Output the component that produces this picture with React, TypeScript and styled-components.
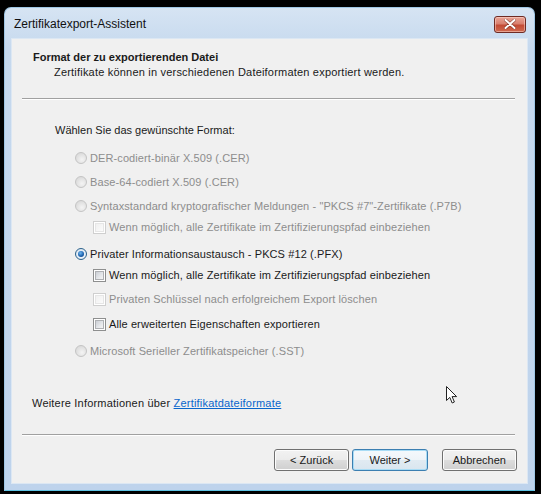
import React from "react";
import styled, { createGlobalStyle } from "styled-components";

const Global = createGlobalStyle`
  html, body { margin: 0; padding: 0; background: #000; }
  body { font-family: "Liberation Sans", Arial, sans-serif; }
`;

const Page = styled.div`
  position: relative;
  width: 541px;
  height: 494px;
  background: #000;
  overflow: hidden;
  padding: 7px 0 0 4px;
  box-sizing: border-box;
`;

const Window = styled.div`
  width: 531px;
  height: 484px;
  box-sizing: border-box;
  border: 1px solid #9fc6e4;
  border-bottom-color: #5fc3e3;
  border-radius: 7px 7px 0 0;
  background: linear-gradient(#d6e4f3 0px, #c6d9ee 40px, #bed3ec 100%);
  padding: 0 6px 6px 6px;
  display: flex;
  flex-direction: column;
`;

const TitleBar = styled.div`
  height: 30px;
  display: flex;
  align-items: center;
  justify-content: space-between;
  padding: 2px 2px 0 3px;
  box-sizing: border-box;
`;

const Title = styled.span`
  font-family: "Liberation Sans", Arial, sans-serif;
  font-size: 12px;
  color: #111;
`;

const CloseButton = styled.div`
  width: 32px;
  height: 17px;
  box-sizing: border-box;
  border: 1px solid #6e2b24;
  border-radius: 3px;
  background: linear-gradient(#e9a597 0%, #d9806f 45%, #c34b35 55%, #cf6a50 100%);
  box-shadow: inset 0 0 0 1px rgba(255, 220, 210, 0.5);
  display: flex;
  align-items: center;
  justify-content: center;
`;

const Client = styled.div`
  flex: 1;
  background: #f0f0f0;
  border: 1px solid #dce7f3;
  box-sizing: border-box;
  display: flex;
  flex-direction: column;
  color: #1a1a1a;
  font-size: 11px;
`;

const Heading = styled.div`
  font-weight: bold;
  margin: 11px 0 0 21px;
  line-height: 14px;
  font-size: 11px;
`;

const SubHeading = styled.div`
  margin: 1px 0 0 42px;
  line-height: 14px;
  letter-spacing: 0.2px;
`;

const Separator = styled.div<{ $top: number }>`
  margin: ${(p) => p.$top}px 12px 0 10px;
  height: 0;
  border-top: 1px solid #a0a0a0;
  border-bottom: 1px solid #ffffff;
`;

const Prompt = styled.div`
  margin: 23px 0 0 43px;
  line-height: 14px;
`;

const OptionList = styled.div`
  display: flex;
  flex-direction: column;
  margin-left: 63px;
`;

const Option = styled.label<{ $top: number; $indent?: boolean; $disabled?: boolean }>`
  display: flex;
  align-items: center;
  gap: 3px;
  height: 14px;
  line-height: 14px;
  margin-top: ${(p) => p.$top}px;
  margin-left: ${(p) => (p.$indent ? 18 : 0)}px;
  color: ${(p) => (p.$disabled ? "#8d8d8d" : "#1a1a1a")};
  white-space: nowrap;
  letter-spacing: 0.1px;
`;

const RadioMark = styled.span<{ $checked?: boolean; $disabled?: boolean }>`
  width: 12px;
  height: 12px;
  box-sizing: border-box;
  border-radius: 50%;
  border: 1px solid ${(p) => (p.$disabled ? "#c4c4c4" : "#2c628b")};
  background: ${(p) =>
    p.$disabled
      ? "radial-gradient(circle at 60% 65%, #f4f4f4 0%, #e0e0e0 60%, #d4d4d4 100%)"
      : "radial-gradient(circle at 55% 60%, #f8fbfe 0%, #dce8f3 70%, #c5d6e6 100%)"};
  display: flex;
  align-items: center;
  justify-content: center;
  flex-shrink: 0;
  &::after {
    content: "";
    display: ${(p) => (p.$checked ? "block" : "none")};
    width: 6px;
    height: 6px;
    border-radius: 50%;
    background: radial-gradient(circle at 40% 35%, #6fb7f0 0%, #1e64b0 55%, #0b3a72 100%);
  }
`;

const CheckMark = styled.span<{ $disabled?: boolean }>`
  width: 13px;
  height: 13px;
  box-sizing: border-box;
  border: 1px solid ${(p) => (p.$disabled ? "#cfcfcf" : "#8e8f8f")};
  padding: 1px;
  background: #ffffff;
  flex-shrink: 0;
  &::after {
    content: "";
    display: block;
    width: 100%;
    height: 100%;
    box-sizing: border-box;
    border: 1px solid ${(p) => (p.$disabled ? "#e6e6e6" : "#aeb0b3")};
    background: ${(p) =>
      p.$disabled
        ? "linear-gradient(135deg, #f0f0f0, #fbfbfb)"
        : "linear-gradient(135deg, #cbcfd5 0%, #e6e8eb 60%, #f4f4f4 100%)"};
  }
`;

const InfoLine = styled.div`
  margin: 38px 0 0 20px;
  line-height: 14px;
  letter-spacing: 0.2px;
`;

const Link = styled.a`
  color: #0a66cc;
  text-decoration: underline;
  cursor: pointer;
`;

const ButtonRow = styled.div`
  display: flex;
  margin: 13px 10px 0 262px;
  gap: 3px;
`;

const Button = styled.button<{ $default?: boolean; $gapLeft?: number }>`
  width: 76px;
  height: 22px;
  box-sizing: border-box;
  font-family: "Liberation Sans", Arial, sans-serif;
  font-size: 11px;
  color: #1a1a1a;
  border-radius: 3px;
  border: 1px solid ${(p) => (p.$default ? "#3c7fb1" : "#707070")};
  background: ${(p) =>
    p.$default
      ? "linear-gradient(#f4f9fc 0%, #eef4f8 50%, #e1ebf2 51%, #d9e6ef 100%)"
      : "linear-gradient(#f2f2f2 0%, #ebebeb 50%, #dddddd 51%, #cfcfcf 100%)"};
  box-shadow: inset 0 0 0 1px ${(p) => (p.$default ? "#a8dcf5" : "#fcfcfc")};
  margin-left: ${(p) => p.$gapLeft ?? 0}px;
  padding: 0;
`;

const Cursor = styled.svg`
  position: absolute;
  left: 445px;
  top: 385px;
`;

const options: {
  kind: "radio" | "check";
  label: string;
  top: number;
  disabled?: boolean;
  checked?: boolean;
}[] = [
  { kind: "radio", label: "DER-codiert-binär X.509 (.CER)", top: 14, disabled: true },
  { kind: "radio", label: "Base-64-codiert X.509 (.CER)", top: 10, disabled: true },
  {
    kind: "radio",
    label: 'Syntaxstandard kryptografischer Meldungen - "PKCS #7"-Zertifikate (.P7B)',
    top: 10,
    disabled: true,
  },
  { kind: "check", label: "Wenn möglich, alle Zertifikate im Zertifizierungspfad einbeziehen", top: 7, disabled: true },
  { kind: "radio", label: "Privater Informationsaustausch - PKCS #12 (.PFX)", top: 13, checked: true },
  { kind: "check", label: "Wenn möglich, alle Zertifikate im Zertifizierungspfad einbeziehen", top: 7 },
  { kind: "check", label: "Privaten Schlüssel nach erfolgreichem Export löschen", top: 10, disabled: true },
  { kind: "check", label: "Alle erweiterten Eigenschaften exportieren", top: 11 },
  { kind: "radio", label: "Microsoft Serieller Zertifikatspeicher (.SST)", top: 13, disabled: true },
];

export default function App() {
  return (
    <>
      <Global />
      <Page>
        <Window>
          <TitleBar>
            <Title>Zertifikatexport-Assistent</Title>
            <CloseButton>
              <svg width="12" height="10" viewBox="0 0 12 10">
                <path
                  d="M1.5 1 L10.5 9 M10.5 1 L1.5 9"
                  stroke="#5a1a12"
                  strokeWidth="3.2"
                  strokeLinecap="round"
                  opacity="0.55"
                />
                <path
                  d="M1.5 1 L10.5 9 M10.5 1 L1.5 9"
                  stroke="#ffffff"
                  strokeWidth="2"
                  strokeLinecap="round"
                />
              </svg>
            </CloseButton>
          </TitleBar>
          <Client>
            <Heading>Format der zu exportierenden Datei</Heading>
            <SubHeading>Zertifikate können in verschiedenen Dateiformaten exportiert werden.</SubHeading>
            <Separator $top={19} />
            <Prompt>Wählen Sie das gewünschte Format:</Prompt>
            <OptionList>
              {options.map((o, i) => (
                <Option key={i} $top={o.top} $indent={o.kind === "check"} $disabled={o.disabled}>
                  {o.kind === "radio" ? (
                    <RadioMark $checked={o.checked} $disabled={o.disabled} />
                  ) : (
                    <CheckMark $disabled={o.disabled} />
                  )}
                  <span>{o.label}</span>
                </Option>
              ))}
            </OptionList>
            <InfoLine>
              Weitere Informationen über <Link>Zertifikatdateiformate</Link>
            </InfoLine>
            <Separator $top={24} />
            <ButtonRow>
              <Button>&lt; Zurück</Button>
              <Button $default>Weiter &gt;</Button>
              <Button $gapLeft={11}>Abbrechen</Button>
            </ButtonRow>
          </Client>
        </Window>
        <Cursor width="14" height="20" viewBox="0 0 14 20">
          <path
            d="M1.5 1.5 L1.5 15.5 L4.8 12.4 L7.2 18 L9.4 17 L7.1 11.6 L11.6 11.6 Z"
            fill="#ffffff"
            stroke="#222"
            strokeWidth="1"
            strokeLinejoin="round"
          />
        </Cursor>
      </Page>
    </>
  );
}
